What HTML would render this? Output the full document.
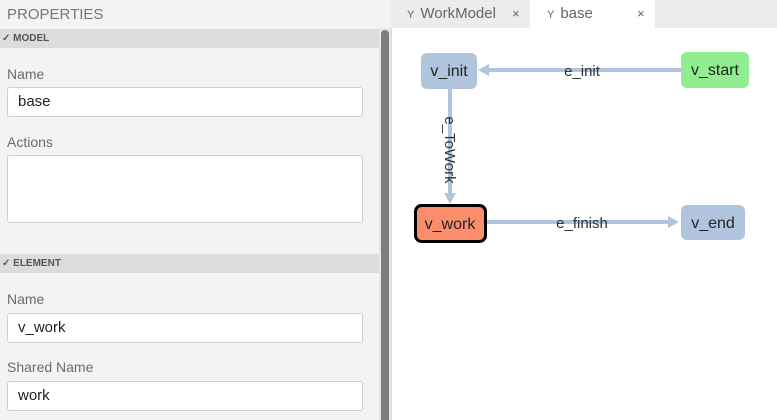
<!DOCTYPE html>
<html><head><style>
body{margin:0;width:777px;height:420px;overflow:hidden;font-family:"Liberation Sans",sans-serif;background:#fff;position:relative}
.a{position:absolute}
.lbl{position:absolute;left:7px;font-size:14px;color:#6b6b6b}
.inp{position:absolute;left:7px;width:356px;background:#fff;border:1px solid #cfcfcf;border-radius:3px;box-sizing:border-box;font-size:15px;color:#222;padding-left:10px}
.sec{position:absolute;left:0;width:379px;height:19px;background:#dcdcdc;font-size:10px;font-weight:bold;color:#555;line-height:19px;padding-left:2px;box-sizing:border-box}
.tab{position:absolute;top:0;height:28px;line-height:28px;font-size:15px;color:#666}
</style></head><body>
<div class="a" style="left:0;top:0;width:391px;height:420px;background:#f3f3f3"></div>
<div class="a" style="left:7px;top:6px;font-size:15px;color:#777">PROPERTIES</div>
<div class="sec" style="top:29px">✓ MODEL</div>
<div class="lbl" style="top:66px">Name</div>
<div class="inp" style="top:87px;height:30px;line-height:28px">base</div>
<div class="lbl" style="top:134px">Actions</div>
<div class="inp" style="top:155px;height:68px"></div>
<div class="sec" style="top:254px">✓ ELEMENT</div>
<div class="lbl" style="top:291px">Name</div>
<div class="inp" style="top:313px;height:30px;line-height:28px">v_work</div>
<div class="lbl" style="top:359px">Shared Name</div>
<div class="inp" style="top:381px;height:30px;line-height:28px">work</div>
<div class="a" style="left:379px;top:28px;width:12px;height:392px;background:#e6e6e6"></div>
<div class="a" style="left:381px;top:30px;width:8px;height:390px;background:#7d7d7d;border-radius:4px 4px 0 0"></div>
<div class="a" style="left:391px;top:0;width:386px;height:28px;background:#ececec"></div>
<div class="a" style="left:391px;top:28px;width:1px;height:392px;background:#ddd"></div>
<div class="tab" style="left:392px;width:138px;background:#ececec"><span style="margin-left:15px;font-size:11px">Y</span><span style="margin-left:6px">WorkModel</span><span style="position:absolute;left:120px;font-size:13px">×</span></div>
<div class="tab" style="left:530px;width:125px;background:#fff"><span style="margin-left:17px;font-size:11px">Y</span><span style="margin-left:6px">base</span><span style="position:absolute;left:107px;font-size:13px">×</span></div>
<svg class="a" style="left:0;top:0" width="777" height="420">
<g stroke="#b0c4de" stroke-width="4" fill="none">
<line x1="486" y1="70" x2="681" y2="70"/>
<line x1="450" y1="89" x2="450" y2="196"/>
<line x1="487" y1="222" x2="670" y2="222"/>
</g>
<g fill="#b0c4de">
<polygon points="478,70 489,64 489,76"/>
<polygon points="450,204 444,193 456,193"/>
<polygon points="679,222 668,216 668,228"/>
</g>
<rect x="421" y="53" width="56" height="36" rx="6" fill="#b0c4de"/>
<rect x="681" y="52" width="68" height="36" rx="6" fill="#90ee90"/>
<rect x="681" y="205" width="64" height="35" rx="6" fill="#b0c4de"/>
<rect x="415.5" y="205.5" width="70" height="36" rx="6" fill="#fa8e6c" stroke="#000" stroke-width="3"/>
<g font-family="Liberation Sans" font-size="16" fill="#222" text-anchor="middle">
<text x="449" y="76">v_init</text>
<text x="715" y="75">v_start</text>
<text x="450" y="229">v_work</text>
<text x="713" y="228">v_end</text>
<text x="582" y="76" font-size="15" fill="#333">e_init</text>
<text x="582" y="228" font-size="15" fill="#333">e_finish</text>
<text x="0" y="0" font-size="15" fill="#333" transform="translate(445,150) rotate(90)">e_ToWork</text>
</g>
</svg>
</body></html>
